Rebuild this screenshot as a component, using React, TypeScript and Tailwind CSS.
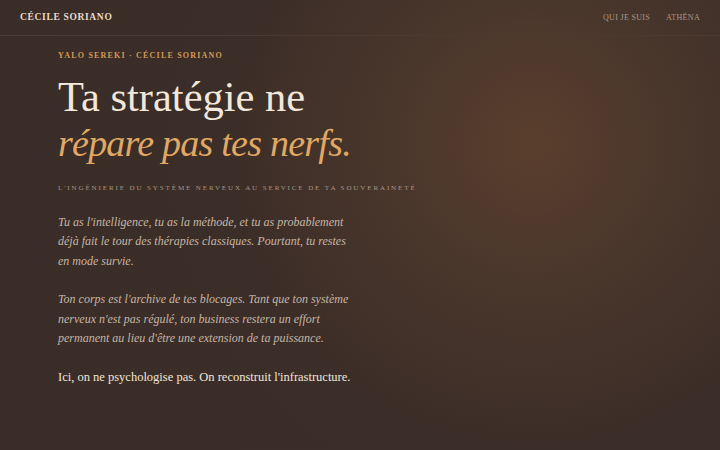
import React from 'react';

const serif = "font-['Liberation_Serif','DejaVu_Serif',serif]";

const Header: React.FC = () => (
  <header className="flex h-[36px] items-center justify-between border-b border-[#4a3a31] px-5">
    <div className="text-[9.5px] font-bold tracking-[0.07em] text-[#e8dccd]">CÉCILE SORIANO</div>
    <nav className="flex gap-[16px] text-[8px] tracking-[0.04em] text-[#a8978a]">
      <a href="#">QUI JE SUIS</a>
      <a href="#">ATHÉNA</a>
    </nav>
  </header>
);

const App: React.FC = () => {
  return (
    <div
      className={`${serif} h-[450px] w-[720px] overflow-hidden bg-[#3a2c26] bg-[radial-gradient(circle_at_74%_32%,#5a3e2d_0%,#4a372c_22%,#3b2d27_50%,#3a2c26_100%)]`}
    >
      <Header />
      <main className="pl-[58px] pt-[14px]">
        <div className="text-[8px] font-bold tracking-[0.15em] text-[#d29a56]">
          YALO SEREKI · CÉCILE SORIANO
        </div>
        <h1 className="mt-[12px] font-normal text-[#f1e7da]">
          <span className="block text-[42.5px] leading-[46px]">Ta stratégie ne</span>
          <em className="block text-[38px] leading-[46px] tracking-[-0.02em] text-[#e0a863]">
            répare pas tes nerfs.
          </em>
        </h1>
        <div className="mt-[17px] text-[7px] tracking-[0.27em] text-[#a89588]">
          L'INGÉNIERIE DU SYSTÈME NERVEUX AU SERVICE DE TA SOUVERAINETÉ
        </div>
        <div className="mt-[19px] flex flex-col gap-[19px] leading-[19.5px]">
          <p className="text-[12px] italic text-[#c6b6a6]">
            Tu as l'intelligence, tu as la méthode, et tu as probablement
            <br />
            déjà fait le tour des thérapies classiques. Pourtant, tu restes
            <br />
            en mode survie.
          </p>
          <p className="text-[12px] italic text-[#c6b6a6]">
            Ton corps est l'archive de tes blocages. Tant que ton système
            <br />
            nerveux n'est pas régulé, ton business restera un effort
            <br />
            permanent au lieu d'être une extension de ta puissance.
          </p>
          <p className="text-[12.5px] text-[#f1e7da]">
            Ici, on ne psychologise pas. On reconstruit l'infrastructure.
          </p>
        </div>
      </main>
    </div>
  );
};

export default App;
